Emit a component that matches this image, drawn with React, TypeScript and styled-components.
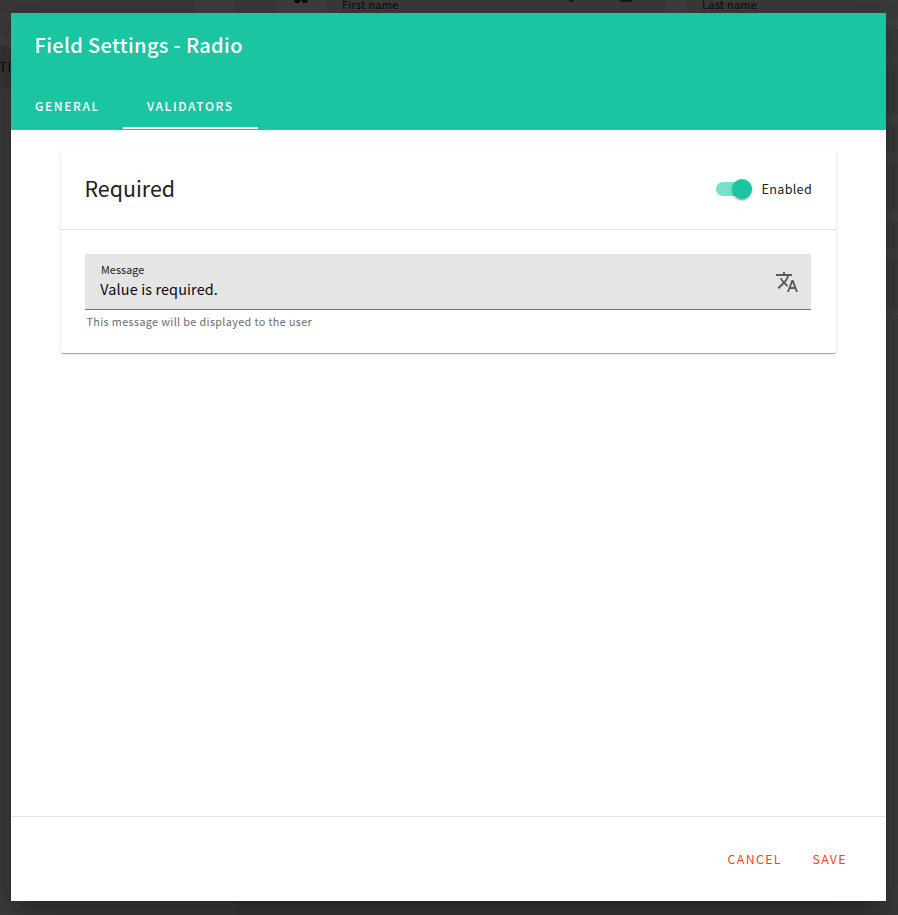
import React from "react";
import styled, { createGlobalStyle } from "styled-components";

const GlobalStyle = createGlobalStyle`
  * { box-sizing: border-box; }
  html, body { margin: 0; background: #363636; overflow: hidden; }
  body {
    font-family: "Noto Sans CJK SC", "Noto Sans", sans-serif;
    color: #212121;
    -webkit-font-smoothing: antialiased;
  }
`;

const Screen = styled.div`
  display: grid;
  grid-template-columns: 11px 875px 12px;
  grid-template-rows: 13px 888px 14px;
  width: 898px;
  height: 915px;
`;

const TopStrip = styled.div`
  grid-column: 1 / -1;
  display: flex;
  min-height: 0;
`;

const Slab = styled.div<{ $w?: number; $h?: number; $tone: string }>`
  flex: ${(p) => (p.$w || p.$h ? "none" : "1")};
  width: ${(p) => (p.$w ? `${p.$w}px` : "auto")};
  height: ${(p) => (p.$h ? `${p.$h}px` : "auto")};
  background: ${(p) => p.$tone};
  display: flex;
`;

const DimLabel = styled.span<{ $left: number }>`
  padding-left: ${(p) => p.$left}px;
  margin-top: -2px;
  font-size: 11px;
  line-height: 13px;
  letter-spacing: 0.25px;
  color: #0b0b0b;
  white-space: nowrap;
`;

const SideStrip = styled.div`
  display: flex;
  flex-direction: column;
  min-width: 0;
`;

const TypeLabel = styled.span`
  margin-left: -1px;
  font-size: 13px;
  line-height: 41px;
  color: #101010;
  letter-spacing: 0.6px;
`;

const BottomStrip = styled.div`
  grid-column: 1 / -1;
  display: flex;
`;

const Dialog = styled.section`
  position: relative;
  display: flex;
  flex-direction: column;
  background: #fff;
  box-shadow: 0 11px 15px -7px rgba(0, 0, 0, 0.2), 0 24px 38px 3px rgba(0, 0, 0, 0.14),
    0 9px 46px 8px rgba(0, 0, 0, 0.12);
`;

const Header = styled.header`
  height: 117px;
  flex: none;
  display: flex;
  flex-direction: column;
  justify-content: space-between;
  background: #1bc5a2;
  color: #fff;
`;

const Title = styled.h1`
  margin: 16px 0 0 23.5px;
  font-size: 20px;
  font-weight: 500;
  line-height: 32px;
  letter-spacing: 0.34px;
`;

const Tabs = styled.nav`
  display: flex;
  height: 48px;
  padding-bottom: 1px;
`;

const Tab = styled.button<{ $w: number; $active?: boolean }>`
  width: ${(p) => p.$w}px;
  padding: 2px 0 0 24px;
  border: 0;
  border-bottom: 2px solid ${(p) => (p.$active ? "#fff" : "transparent")};
  background: none;
  color: #fff;
  font: 500 12px/43px "Noto Sans CJK SC", sans-serif;
  letter-spacing: 1.6px;
  text-align: left;
  white-space: nowrap;
`;

const Content = styled.main`
  flex: 1;
  padding: 19px 50px 0;
`;

const Card = styled.section`
  height: 204px;
  border-radius: 2px;
  background: #fff;
  box-shadow: 0 2px 1px -1px rgba(0, 0, 0, 0.2), 0 1px 1px rgba(0, 0, 0, 0.14),
    0 1px 3px rgba(0, 0, 0, 0.12);
`;

const CardHeader = styled.div`
  height: 81px;
  padding: 0 24px;
  display: flex;
  align-items: center;
  justify-content: space-between;
  border-bottom: 1px solid #e3e3e3;
`;

const CardTitle = styled.h2`
  margin: -2px 0 0 -0.5px;
  font-size: 21.4px;
  font-weight: 400;
  line-height: 32px;
`;

const SwitchLabel = styled.label`
  display: flex;
  align-items: center;
  gap: 10px;
`;

const SwitchText = styled.span`
  font-size: 12.6px;
  line-height: 20px;
  letter-spacing: 0.3px;
`;

const Track = styled.span`
  display: flex;
  align-items: center;
  justify-content: flex-end;
  width: 36px;
  height: 14px;
  border-radius: 7px;
  background: #76e2cb;
`;

const Thumb = styled.span`
  flex: none;
  width: 20px;
  height: 20px;
  border-radius: 50%;
  background: #1bc5a2;
  box-shadow: 0 3px 1px -2px rgba(0, 0, 0, 0.2), 0 2px 2px rgba(0, 0, 0, 0.14),
    0 1px 5px rgba(0, 0, 0, 0.12);
`;

const CardBody = styled.div`
  padding: 24px 25px 0 24px;
`;

const Field = styled.div`
  height: 56px;
  padding: 0 12px 0 16px;
  display: flex;
  align-items: center;
  justify-content: space-between;
  background: #e5e5e5;
  border-bottom: 1px solid #6f6f6f;
`;

const FieldText = styled.div`
  display: flex;
  flex-direction: column;
  margin-top: -1px;
`;

const FieldLabel = styled.span`
  font-size: 10.8px;
  line-height: 15px;
  letter-spacing: 0.08px;
  color: #222;
`;

const FieldValue = styled.span`
  margin-left: -0.7px;
  font-size: 14.4px;
  line-height: 23px;
  letter-spacing: 0.13px;
  color: #080808;
`;

const Helper = styled.p`
  margin: 3px 0 0 1.5px;
  font-size: 10.8px;
  line-height: 16px;
  letter-spacing: 0.37px;
  color: #6c6c6c;
`;

const Footer = styled.footer`
  height: 85px;
  border-top: 1px solid #e3e3e3;
  padding: 0 39px 0 0;
  display: flex;
  align-items: center;
  justify-content: flex-end;
  gap: 30.5px;
`;

const Action = styled.button`
  padding: 0;
  border: 0;
  background: none;
  color: #fa4220;
  font: 400 12.4px/20px "Noto Sans CJK SC", sans-serif;
  letter-spacing: 1.35px;
`;

const TranslateIcon = () => (
  <svg width="24" height="24" viewBox="0 0 24 24" fill="#5b5b5b">
    <path d="M12.87 15.07l-2.54-2.51.03-.03c1.74-1.94 2.98-4.17 3.71-6.53H17V4h-7V2H8v2H1v1.99h11.17C11.5 7.92 10.44 9.75 9 11.35 8.07 10.32 7.3 9.19 6.69 8h-2c.73 1.63 1.73 3.17 2.98 4.56l-5.09 5.02L4 19l5-5 3.11 3.11.76-2.04zM18.5 10h-2L12 22h2l1.12-3h4.75L21 22h2l-4.5-12zm-2.62 7l1.62-4.33L19.12 17h-3.24z" />
  </svg>
);

const DragDots = () => (
  <svg width="50" height="13" fill="#080808">
    <circle cx="21.3" cy="0" r="3.1" />
    <circle cx="28.7" cy="0" r="3.1" />
  </svg>
);

const EditIcons = () => (
  <svg width="170" height="13" fill="#1c1c1c">
    <path d="M73 0h5l-2 2h-3z" />
    <path d="M124 0h12v1q0 1-1 1h-10q-1 0-1-1z" />
  </svg>
);

const rightRows: [number, boolean][] = [
  [5, false], [11, true], [26, false], [10, true], [49, false], [11, true], [27, false],
  [10, true], [49, false], [11, true], [26, false], [10, true], [51, false], [10, true],
];

export default function App() {
  return (
    <>
      <GlobalStyle />
      <Screen>
        <TopStrip>
          <Slab $w={194} $tone="#393939" />
          <Slab $w={41} $tone="#3e3e3e" />
          <Slab $w={41} $tone="#3a3a3a" />
          <Slab $w={50} $tone="#3f3f3f"><DragDots /></Slab>
          <Slab $w={170} $tone="#3b3b3b"><DimLabel $left={16}>First name</DimLabel></Slab>
          <Slab $w={170} $tone="#3b3b3b"><EditIcons /></Slab>
          <Slab $w={20} $tone="#3f3f3f" />
          <Slab $tone="#3b3b3b"><DimLabel $left={16}>Last name</DimLabel></Slab>
        </TopStrip>
        <SideStrip>
          <Slab $h={23} $tone="#3a3a3a" />
          <Slab $h={10} $tone="#404040" />
          <Slab $h={43} $tone="#373737"><TypeLabel>TI</TypeLabel></Slab>
          <Slab $tone="#3c3c3c" />
        </SideStrip>
        <Dialog role="dialog" aria-label="Field Settings - Radio">
          <Header>
            <Title>Field Settings - Radio</Title>
            <Tabs>
              <Tab $w={112}>GENERAL</Tab>
              <Tab $w={135} $active>VALIDATORS</Tab>
            </Tabs>
          </Header>
          <Content>
            <Card>
              <CardHeader>
                <CardTitle>Required</CardTitle>
                <SwitchLabel>
                  <Track><Thumb /></Track>
                  <SwitchText>Enabled</SwitchText>
                </SwitchLabel>
              </CardHeader>
              <CardBody>
                <Field>
                  <FieldText>
                    <FieldLabel>Message</FieldLabel>
                    <FieldValue>Value is required.</FieldValue>
                  </FieldText>
                  <TranslateIcon />
                </Field>
                <Helper>This message will be displayed to the user</Helper>
              </CardBody>
            </Card>
          </Content>
          <Footer>
            <Action>CANCEL</Action>
            <Action>SAVE</Action>
          </Footer>
        </Dialog>
        <SideStrip>
          {rightRows.map(([h, light], i) => (
            <Slab key={i} $h={h} $tone={light ? "#404040" : "#3b3b3b"} />
          ))}
          <Slab $tone="#3c3c3c" />
        </SideStrip>
        <BottomStrip>
          <Slab $w={235} $tone="#3e3e3e" />
          <Slab $tone="#3a3a3a" />
        </BottomStrip>
      </Screen>
    </>
  );
}
